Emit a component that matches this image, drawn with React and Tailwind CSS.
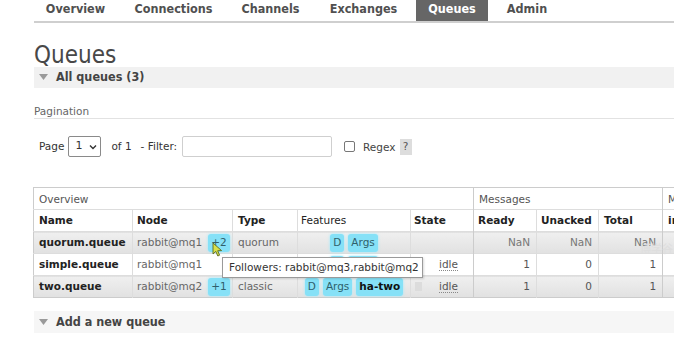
const narrow = "font-['Liberation_Sans_Narrow','DejaVu_Sans_Condensed','Arial_Narrow',sans-serif]";

const tabs = [
  { label: "Overview", w: "w-[83px]" },
  { label: "Connections", w: "w-[101px]" },
  { label: "Channels", w: "w-[81px]" },
  { label: "Exchanges", w: "w-[93px]" },
  { label: "Queues", w: "w-[72px]", active: true },
  { label: "Admin", w: "w-[66px]" },
];

function Badge({ children, bold }) {
  return (
    <span
      className={[
        "inline-flex h-[18px] items-center rounded-[3px] bg-[#86e1f7] px-[3px] text-[#2f5f6b] shadow-[0_0_3px_#9beaff]",
        bold ? "font-bold text-[#111]" : "",
      ].join(" ")}
    >
      {children}
    </span>
  );
}

function Triangle() {
  return (
    <svg width="9" height="7" viewBox="0 0 9 7" className="shrink-0">
      <path d="M0 0 L9 0 L4.5 6 Z" fill="#9a9a9a" />
    </svg>
  );
}

function Idle() {
  return <span className="border-b border-dotted border-[#888] leading-[12px]">idle</span>;
}

const rows = [
  {
    name: "quorum.queue",
    node: "rabbit@mq1",
    extra: "+2",
    type: "quorum",
    features: ["D", "Args"],
    state: null,
    nums: ["NaN", "NaN", "NaN"],
    alt: true,
  },
  {
    name: "simple.queue",
    node: "rabbit@mq1",
    type: "classic",
    features: ["D", "Args"],
    state: "idle",
    nums: ["1", "0", "1"],
  },
  {
    name: "two.queue",
    node: "rabbit@mq2",
    extra: "+1",
    type: "classic",
    features: ["D", "Args"],
    ha: "ha-two",
    state: "idle",
    box: true,
    nums: ["1", "0", "1"],
    alt: true,
  },
];

export default function App() {
  return (
    <div className="relative h-[337px] w-[674px] overflow-hidden bg-white font-['DejaVu_Sans',sans-serif] text-[10.5px] text-[#333]">
      {/* top tabs */}
      <nav className={`ml-[34px] flex h-[23px] gap-[6px] border-b-2 border-[#cfcfcf] ${narrow}`}>
        {tabs.map((t) => (
          <div
            key={t.label}
            className={[
              "flex h-[21px] items-center justify-center pb-[2px] text-[12.5px] font-bold",
              t.w,
              t.active ? "bg-[#666] text-white" : "text-[#505050]",
            ].join(" ")}
          >
            {t.label}
          </div>
        ))}
      </nav>

      <h1 className={`ml-[34px] mt-[19px] h-[25px] text-[24px] leading-[26px] text-[#484848] ${narrow}`}>
        Queues
      </h1>

      <div className={`ml-[34px] flex h-[21px] items-center gap-[8px] bg-[#f1f1f1] pl-[5px] text-[12.5px] font-bold text-[#444] ${narrow}`}>
        <Triangle />
        <span>All queues (3)</span>
      </div>

      {/* pagination */}
      <div className="ml-[34px] mt-[17px] h-[14px] border-b border-[#e2e2e2] text-[#666] leading-[12px]">
        Pagination
      </div>

      <div className="ml-[39px] mt-[17px] flex h-[21px] items-center text-[#333]">
        <span>Page</span>
        <div className="ml-[4px] flex h-[21px] w-[33px] items-center rounded-[2px] border border-[#8a8a8a] pl-[6px]">
          <span className="text-[11px]">1</span>
          <svg width="8" height="6" viewBox="0 0 8 6" className="ml-[7px]">
            <path d="M1 1.5 L4 4.5 L7 1.5" fill="none" stroke="#333" strokeWidth="1.4" />
          </svg>
        </div>
        <span className="ml-[10px]">of 1</span>
        <span className="ml-[9px]">- Filter:</span>
        <div className="ml-[5px] h-[21px] w-[150px] rounded-[2px] border border-[#cfcfcf] bg-white" />
        <div className="ml-[12px] h-[11px] w-[11px] rounded-[2px] border border-[#777] bg-white" />
        <span className="ml-[8px] mt-[2px] text-[#444]">Regex</span>
        <span className="ml-[4px] flex h-[16px] w-[12px] items-center justify-center bg-[#ddd] text-[#555]">?</span>
      </div>

      {/* table */}
      <table className="ml-[33px] mt-[30px] w-[720px] table-fixed border-collapse border border-[#ccc]">
        <colgroup>
          <col className="w-[99px]" />
          <col className="w-[100px]" />
          <col className="w-[65px]" />
          <col className="w-[113px]" />
          <col className="w-[63px]" />
          <col className="w-[63px]" />
          <col className="w-[62px]" />
          <col className="w-[64px]" />
          <col className="w-[91px]" />
        </colgroup>
        <thead>
          <tr className="h-[22px] text-left font-normal text-[#555]">
            <th colSpan={5} className="border-r border-[#ccc] px-[5px] pt-[2px] font-normal">Overview</th>
            <th colSpan={3} className="border-r border-[#ccc] px-[5px] pt-[2px] font-normal">Messages</th>
            <th className="px-[5px] pt-[2px] font-normal">M</th>
          </tr>
          <tr className="h-[22px] border-t border-[#ddd] text-left font-bold text-[#222]">
            <th className="border-r border-[#ddd] px-[5px]">Name</th>
            <th className="border-r border-[#ddd] px-[4px]">Node</th>
            <th className="border-r border-[#ddd] px-[5px]">Type</th>
            <th className="border-r border-[#ddd] px-[3px] font-normal">Features</th>
            <th className="border-r border-[#ccc] px-[3px]">State</th>
            <th className="border-r border-[#ddd] px-[4px]">Ready</th>
            <th className="border-r border-[#ddd] px-[4px]">Unacked</th>
            <th className="border-r border-[#ccc] px-[5px]">Total</th>
            <th className="px-[5px]">in</th>
          </tr>
        </thead>
        <tbody>
          {rows.map((r) => (
            <tr
              key={r.name}
              className={[
                "h-[22px] border-t border-[#ddd]",
                r.alt ? "bg-linear-to-b from-[#efefef] to-[#e1e1e1]" : "bg-white",
              ].join(" ")}
            >
              <td className="border-r border-[#ddd] px-[5px] font-bold text-[#222]">{r.name}</td>
              <td className="border-r border-[#ddd] px-[4px] text-[#666]">
                <div className="flex items-center gap-[6px]">
                  <span>{r.node}</span>
                  {r.extra && <Badge>{r.extra}</Badge>}
                </div>
              </td>
              <td className="border-r border-[#ddd] px-[5px] align-top pt-[3px] text-[#666]">{r.type}</td>
              <td className="border-r border-[#ddd] px-[3px]">
                <div className="flex items-center justify-center gap-[4px]">
                  {r.features.map((f) => (
                    <Badge key={f}>{f}</Badge>
                  ))}
                  {r.ha && <Badge bold>{r.ha}</Badge>}
                </div>
              </td>
              <td className="border-r border-[#ccc] px-[4px] text-[#555]">
                {r.state && (
                  <div className="flex items-center">
                    <span className={r.box ? "h-[9px] w-[7px] bg-[#dcdcdc]" : "w-[7px]"} />
                    <span className="ml-[17px]">
                      <Idle />
                    </span>
                  </div>
                )}
              </td>
              {r.nums.map((n, i) => (
                <td
                  key={i}
                  className={[
                    "px-[6px] text-right",
                    i === 2 ? "border-r border-[#ccc]" : "border-r border-[#ddd]",
                    n === "NaN" ? "align-top pt-[3px] text-[#777]" : "text-[#555]",
                  ].join(" ")}
                >
                  {n}
                </td>
              ))}
              <td />
            </tr>
          ))}
        </tbody>
      </table>

      <div className={`ml-[34px] mt-[13px] flex h-[22px] items-center gap-[8px] bg-[#f6f6f6] pl-[5px] text-[12.5px] font-bold text-[#444] ${narrow}`}>
        <Triangle />
        <span>Add a new queue</span>
      </div>

      {/* tooltip over the table */}
      <div className="absolute left-[222px] top-[257px] flex h-[21px] w-[201px] items-center border border-[#9a9a9a] bg-white pl-[6px] text-[#333] shadow-[1px_1px_2px_rgba(0,0,0,0.15)]">
        Followers: rabbit@mq3,rabbit@mq2
      </div>

      {/* mouse cursor */}
      <svg className="absolute left-[212px] top-[242px]" width="11" height="15" viewBox="0 0 11 15">
        <path d="M1 1 L1 12 L3.8 9.4 L5.8 14 L7.6 13.2 L5.7 8.7 L9.6 8.6 Z" fill="#d8e04a" stroke="#5a6a20" strokeWidth="0.9" />
      </svg>

      {/* watermark */}
      <div className="absolute left-[640px] top-[242px] font-['Noto_Sans_CJK_SC',sans-serif] text-[11px] leading-[13px] text-[#dedede]">
        博学谷
      </div>
    </div>
  );
}
